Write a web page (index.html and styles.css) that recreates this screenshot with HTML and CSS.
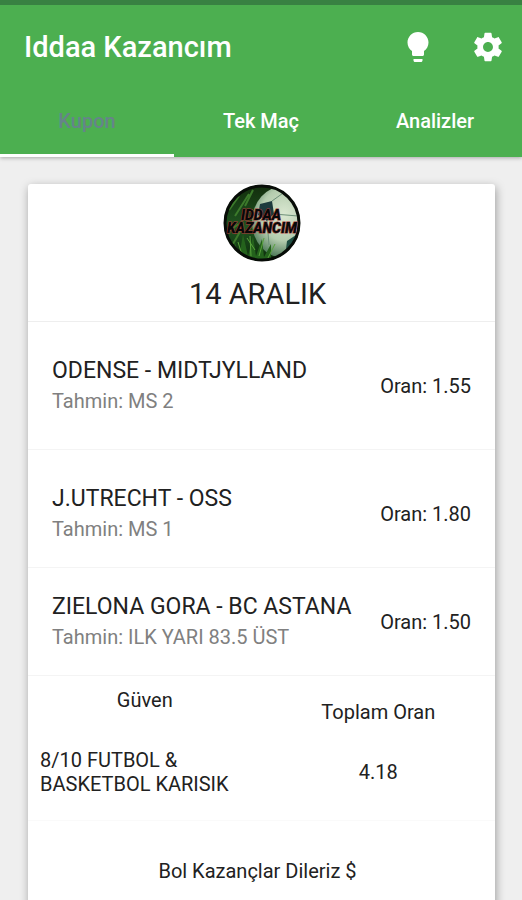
FILE: index.html
```html
<!DOCTYPE html>
<html lang="tr">
<head>
  <meta charset="UTF-8" />
  <meta name="viewport" content="width=device-width, initial-scale=1.0"/>
  <title>Iddaa Kazancım</title>
  <link rel="stylesheet" href="styles.css">
</head>
<body>

  <header class="app-header">
    <div class="toolbar">
      <h1>Iddaa Kazancım</h1>
      <button class="icon-btn" aria-label="Bilgi">
        <svg viewBox="0 0 24 24"><path d="M9 21c0 .55.45 1 1 1h4c.55 0 1-.45 1-1v-1H9v1zm3-19C8.140 2 5 5.140 5 9c0 2.380 1.190 4.470 3 5.740V17c0 .55.45 1 1 1h6c.55 0 1-.45 1-1v-2.260c1.810-1.270 3-3.360 3-5.740 0-3.860-3.140-7-7-7z"/></svg>
      </button>
      <button class="icon-btn" aria-label="Ayarlar">
        <svg viewBox="-.7 -.7 25.400 25.400"><path d="M19.430 12.980c.04-.32.07-.64.07-.98s-.03-.66-.07-.98l2.110-1.650c.19-.15.24-.42.12-.64l-2-3.460c-.12-.22-.39-.3-.61-.22l-2.490 1c-.52-.4-1.080-.73-1.690-.98l-.38-2.650C14.460 2.180 14.250 2 14 2h-4c-.25 0-.46.18-.49.42l-.38 2.650c-.61.25-1.170.59-1.690.98l-2.490-1c-.23-.09-.49 0-.61.22l-2 3.460c-.13.22-.07.49.12.64l2.110 1.650c-.04.32-.07.65-.07.98s.03.66.07.98l-2.110 1.650c-.19.15-.24.42-.12.64l2 3.460c.12.22.39.3.61.22l2.490-1c.52.4 1.080.73 1.690.98l.38 2.650c.03.24.24.42.49.42h4c.25 0 .46-.18.49-.42l.38-2.650c.61-.25 1.170-.59 1.690-.98l2.490 1c.23.09.49 0 .61-.22l2-3.460c.12-.22.07-.49-.12-.64l-2.110-1.650zM12 15.500c-1.930 0-3.500-1.570-3.500-3.500s1.570-3.500 3.500-3.500 3.500 1.570 3.500 3.500-1.570 3.500-3.500 3.500z"/></svg>
      </button>
    </div>
    <nav class="tabs">
      <a href="#kupon" class="tab active">Kupon</a>
      <a href="#tekmac" class="tab">Tek Maç</a>
      <a href="#analizler" class="tab">Analizler</a>
    </nav>
  </header>

  <main class="content">
    <section class="card" id="kupon">
      <div class="card-head">
        <svg class="logo" viewBox="0 0 78 78" role="img" aria-label="Iddaa Kazancım">
          <defs>
            <clipPath id="round"><circle cx="39" cy="39" r="38"/></clipPath>
            <linearGradient id="grass" x1="0" y1="0" x2="0" y2="1">
              <stop offset="0" stop-color="#122c0c"/>
              <stop offset=".55" stop-color="#1f5420"/>
              <stop offset="1" stop-color="#0c2a0b"/>
            </linearGradient>
            <radialGradient id="ball" cx=".5" cy=".4" r=".6">
              <stop offset="0" stop-color="#dbe8d2"/>
              <stop offset=".6" stop-color="#b4ccae"/>
              <stop offset="1" stop-color="#4d7a58"/>
            </radialGradient>
          </defs>
          <g clip-path="url(#round)">
            <rect width="78" height="78" fill="url(#grass)"/>
            <path d="M6 26l10-14M12 32l14-22M22 22l8-16M4 48l12-8M10 60l8-14" stroke="#3c7a2b" stroke-width="2"/>
            <ellipse cx="61" cy="38" rx="32" ry="36" fill="url(#ball)"/>
            <path d="M37 20l12-3 2 13-7 7-9-6z" fill="#1d3b3d"/>
            <path d="M49 17l14-10M51 30l24 2M44 37l2 24" stroke="#6d9079" stroke-width="1" fill="none"/>
            <path d="M64 57l12-8v14l-14 10z" fill="#1f4f43"/>
            <path d="M8 78l4-20 4 16 4-24 5 22 5-20 3 20 6-17 2 18 7-13 0 18z" fill="#24621c"/>
            <path d="M20 74l-5-16M28 72l-1-20M36 72l5-18M45 74l7-14M32 66l-8-12" stroke="#59a33c" stroke-width="1" fill="none"/>
          </g>
          <circle cx="39" cy="39" r="37" fill="none" stroke="#070c07" stroke-width="3"/>
          <g class="logo-text" text-anchor="middle">
            <text x="38" y="36">IDDAA</text>
            <text x="39" y="49">KAZANCIM</text>
          </g>
        </svg>
        <h2>14 ARALIK</h2>
      </div>

      <ul class="matches">
        <li class="match">
          <div>
            <h3>ODENSE - MIDTJYLLAND</h3>
            <p>Tahmin: MS 2</p>
          </div>
          <span class="odds">Oran: 1.55</span>
        </li>
        <li class="match">
          <div>
            <h3>J.UTRECHT - OSS</h3>
            <p>Tahmin: MS 1</p>
          </div>
          <span class="odds">Oran: 1.80</span>
        </li>
        <li class="match">
          <div>
            <h3>ZIELONA GORA - BC ASTANA</h3>
            <p>Tahmin: ILK YARI 83.5 ÜST</p>
          </div>
          <span class="odds">Oran: 1.50</span>
        </li>
      </ul>

      <div class="totals">
        <div class="total">
          <h4>Güven</h4>
          <p class="trust">8/10 FUTBOL &amp; BASKETBOL KARISIK</p>
        </div>
        <div class="total total-odds">
          <h4>Toplam Oran</h4>
          <p>4.18</p>
        </div>
      </div>

      <p class="wish">Bol Kazançlar Dileriz $</p>
    </section>
  </main>

</body>
</html>
```
FILE: styles.css
```css
* { box-sizing: border-box; }
body {
  margin: 0; height: 100vh; overflow: hidden;
  display: flex; flex-direction: column;
  font-family: Roboto, sans-serif; font-size: 20px; line-height: 24px;
  color: #212121; background: #efefef;
}
h1, h2, h3, h4, p, ul { margin: 0; padding: 0; font-weight: 400; }

/* header */
.app-header {
  flex: none; background: #4caf50; color: #fff;
  border-top: 5px solid #388142; box-shadow: 0 1px 4px rgba(0,0,0,.3);
}
.toolbar { display: flex; align-items: center; gap: 34px; height: 84px; padding: 0 16px 0 24px; }
.toolbar h1 { flex: 1; font-size: 29px; line-height: 36px; font-weight: 500; }
.icon-btn { width: 36px; height: 36px; padding: 0; border: 0; background: none; cursor: pointer; }
.icon-btn svg { display: block; width: 36px; height: 36px; fill: #fff; }
.tabs { display: flex; }
.tab {
  flex: 1; padding: 20px 0 21px; text-align: center;
  font-weight: 500; color: #fff; text-decoration: none;
  border-bottom: 3px solid transparent;
}
.tab.active { color: #66848a; border-bottom-color: #fff; }

/* coupon card */
.content { flex: 1; min-height: 0; overflow: hidden; padding: 27px 27px 0 28px; }
.card {
  background: #fff; border-radius: 3px;
  box-shadow: 1px 3px 10px rgba(0,0,0,.35);
}
.card-head { text-align: center; padding-bottom: 9px; border-bottom: 1px solid #eee; }
.logo { display: block; width: 78px; height: 78px; margin: 0 auto; }
.logo-text {
  font: italic 900 14px Roboto, sans-serif; fill: #080808;
  stroke: #a83a3a; stroke-width: 1px; paint-order: stroke;
}
.card-head h2 { font-size: 29px; line-height: 36px; padding: 14px 8px 0 0; }

.matches { list-style: none; }
.match {
  display: flex; align-items: center; justify-content: space-between;
  padding: 24px 24px 23px; border-bottom: 1px solid #f4f4f4;
}
.match:nth-child(1) { padding: 34px 24px 33px; }
.match:nth-child(2) { padding-top: 34px; }
.match h3 { font-size: 23px; line-height: 30px; }
.match p { line-height: 30px; color: #808080; }
.odds { white-space: nowrap; }

.totals { display: flex; border-bottom: 1px solid #fafafa; }
.total { flex: 1; text-align: center; padding: 12px 12px 24px; }
.total h4 { padding-bottom: 36px; }
.total .trust { text-align: left; }
.total-odds { padding-top: 24px; }

.wish { text-align: center; padding: 38px 8px 48px 0; }
```
